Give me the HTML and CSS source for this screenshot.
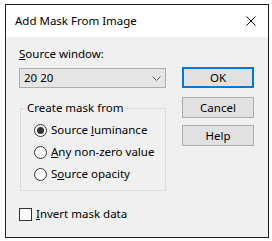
FILE: index.html
```html
<!DOCTYPE html>
<html lang="en">
<head>
  <meta charset="UTF-8" />
  <title>Add Mask From Image</title>
  <link rel="stylesheet" href="styles.css">
</head>
<body>
  <div class="window">
    <div class="titlebar">
      <span class="title">Add Mask From Image</span>
      <svg class="close" width="10" height="10" viewBox="0 0 10 10">
        <path d="M0.5 0.5 L9.5 9.5 M9.5 0.5 L0.5 9.5" stroke="#000" stroke-width="1" fill="none"/>
      </svg>
    </div>

    <div class="content">
      <div class="left">
        <div class="label"><u>S</u>ource window:</div>
        <div class="combo">
          <span>20 20</span>
          <svg width="9" height="5" viewBox="0 0 9 5">
            <path d="M0.5 0.5 L4.5 4.5 L8.5 0.5" stroke="#606060" stroke-width="1" fill="none"/>
          </svg>
        </div>

        <fieldset class="group">
          <legend>Create mask from</legend>
          <div class="option">
            <span class="radio checked"></span>
            <span>Source <u>l</u>uminance</span>
          </div>
          <div class="option">
            <span class="radio"></span>
            <span><u>A</u>ny non-zero value</span>
          </div>
          <div class="option">
            <span class="radio"></span>
            <span>S<u>o</u>urce opacity</span>
          </div>
        </fieldset>

        <div class="check-row">
          <span class="checkbox"></span>
          <span><u>I</u>nvert mask data</span>
        </div>
      </div>

      <div class="buttons">
        <button class="btn default">OK</button>
        <button class="btn cancel">Cancel</button>
        <button class="btn help">Help</button>
      </div>
    </div>
  </div>
</body>
</html>
```

FILE: styles.css
```css
* { box-sizing: border-box; }

body {
  margin: 0;
  background: white;
  font-family: 'Noto Sans', sans-serif;
  font-size: 11.5px;
  line-height: 16px;
  color: #000;
}

.window {
  margin: 4px 0 0 5px;
  width: 264px;
  height: 234px;
  border: 1px solid #1f1f1f;
  background: #f0f0f0;
  display: flex;
  flex-direction: column;
}

.titlebar {
  height: 32px;
  background: white;
  display: flex;
  align-items: center;
  justify-content: space-between;
  padding: 0 12px 0 9px;
}

.content {
  display: flex;
  padding: 9px 0 0 13px;
}

.left {
  width: 147px;
}

.label {
  height: 16px;
}

.combo {
  margin-top: 6px;
  height: 20px;
  background: #e5e5e5;
  border: 1px solid #acacac;
  display: flex;
  align-items: center;
  justify-content: space-between;
  padding: 0 4px;
}

.group {
  margin: 12px 0 0 1px;
  width: 146px;
  padding: 3px 0 5px 13px;
  border: 1px solid #dcdcdc;
  min-width: 0;
}

.group legend {
  padding: 0 2px;
  margin-left: -9px;
  line-height: 16px;
}

.option {
  height: 22px;
  display: flex;
  align-items: center;
  gap: 4px;
}

.radio {
  width: 13px;
  height: 13px;
  border: 1px solid #333;
  border-radius: 50%;
  background: white;
  display: flex;
  align-items: center;
  justify-content: center;
}

.radio.checked::after {
  content: "";
  width: 7px;
  height: 7px;
  border-radius: 50%;
  background: #333;
}

.check-row {
  margin-top: 15px;
  display: flex;
  align-items: center;
  gap: 4px;
}

.checkbox {
  width: 13px;
  height: 13px;
  border: 1px solid #333;
  background: white;
}

.buttons {
  margin-left: 16px;
  display: flex;
  flex-direction: column;
  padding-top: 21px;
}

.btn {
  width: 72px;
  height: 21px;
  background: #e1e1e1;
  border: 1px solid #adadad;
  font-family: 'Noto Sans', sans-serif;
  font-size: 11.5px;
  color: #000;
  padding: 0;
}

.btn.default {
  border: 2px solid #0078d7;
}

.btn.cancel {
  margin-top: 9px;
}

.btn.help {
  margin-top: 7px;
}
```
